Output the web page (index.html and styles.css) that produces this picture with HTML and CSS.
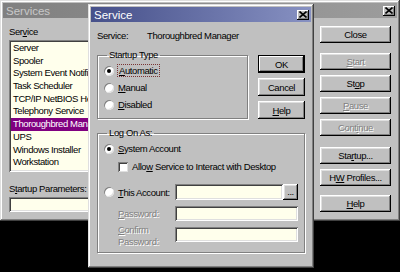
FILE: index.html
```html
<!DOCTYPE html>
<html lang="en">
<head>
    <meta charset="UTF-8" />
    <title>Services</title>
    <link rel="stylesheet" href="styles.css">
</head>
<body>
  <div class="janela servicos">
    <div class="titulo inativo">
      <span>Services</span>
      <span class="fechar"><svg width="8" height="7" viewBox="0 0 8 7"><path d="M0.5 0.5L7.5 6.5M7.5 0.5L0.5 6.5" stroke="#000" stroke-width="1.6"/></svg></span>
    </div>
    <div class="servicos-corpo">
      <div class="servicos-esq">
        <div class="rotulo">Ser<u>v</u>ice</div>
        <ul class="lista">
          <li>Server</li>
          <li>Spooler</li>
          <li>System Event Notification</li>
          <li>Task Scheduler</li>
          <li>TCP/IP NetBIOS Helper</li>
          <li>Telephony Service</li>
          <li class="sel">Thoroughbred Manager</li>
          <li>UPS</li>
          <li>Windows Installer</li>
          <li>Workstation</li>
        </ul>
        <div class="rotulo param">S<u>t</u>artup Parameters:</div>
        <div class="campo"></div>
      </div>
      <div class="servicos-botoes">
        <button class="botao">Close</button>
        <button class="botao off g1"><u>S</u>tart</button>
        <button class="botao g2">St<u>o</u>p</button>
        <button class="botao off g2"><u>P</u>ause</button>
        <button class="botao off g2">Cont<u>i</u>nue</button>
        <button class="botao g3">Sta<u>r</u>tup...</button>
        <button class="botao g2">H<u>W</u> Profiles...</button>
        <button class="botao g4"><u>H</u>elp</button>
      </div>
    </div>
  </div>

  <div class="janela dialogo">
    <div class="titulo ativo">
      <span>Service</span>
      <span class="fechar"><svg width="8" height="7" viewBox="0 0 8 7"><path d="M0.5 0.5L7.5 6.5M7.5 0.5L0.5 6.5" stroke="#000" stroke-width="1.6"/></svg></span>
    </div>
    <div class="dialogo-corpo">
      <div class="linha-servico">
        <span class="nome-rotulo">Service:</span>
        <span>Thoroughbred Manager</span>
      </div>

      <div class="linha-topo">
        <fieldset class="grupo inicio">
          <legend>Startup Type</legend>
          <div class="opcao"><span class="radio marcado"></span><span class="foco"><u>A</u>utomatic</span></div>
          <div class="opcao"><span class="radio"></span><span><u>M</u>anual</span></div>
          <div class="opcao"><span class="radio"></span><span><u>D</u>isabled</span></div>
        </fieldset>
        <div class="dialogo-botoes">
          <button class="botao padrao">OK</button>
          <button class="botao">Cancel</button>
          <button class="botao"><u>H</u>elp</button>
        </div>
      </div>

      <fieldset class="grupo logon">
        <legend>Log On As:</legend>
        <div class="opcao"><span class="radio marcado"></span><span><u>S</u>ystem Account</span></div>
        <div class="opcao check-linha"><span class="check"></span><span>Allo<u>w</u> Service to Interact with Desktop</span></div>
        <div class="opcao conta">
          <span class="radio"></span>
          <span class="conta-rotulo"><u>T</u>his Account:</span>
          <span class="campo curto"></span>
          <button class="botao mini">...</button>
        </div>
        <div class="opcao senha">
          <span class="senha-rotulo off"><u>P</u>assword:</span>
          <span class="campo longo"></span>
        </div>
        <div class="opcao senha confirma">
          <span class="senha-rotulo off"><u>C</u>onfirm<br>Password:</span>
          <span class="campo longo"></span>
        </div>
      </fieldset>
    </div>
  </div>
</body>
</html>
```

FILE: styles.css
```css
body {
    margin: 0;
    width: 400px;
    height: 272px;
    overflow: hidden;
    position: relative;
    background: #000;
    font-family: "Liberation Sans", Arial, sans-serif;
    font-size: 9.5px;
    letter-spacing: -0.4px;
    color: #000;
}

.janela {
    background: #c0c0c0;
    box-sizing: border-box;
    padding: 3px;
    box-shadow: inset -1px -1px #404040, inset 1px 1px #dfdfdf,
                inset -2px -2px #808080, inset 2px 2px #fff;
}

.servicos {
    width: 400px;
    height: 221px;
}

.titulo {
    height: 15px;
    display: flex;
    align-items: center;
    justify-content: space-between;
    padding: 0 2px 0 3px;
    font-size: 11.5px;
    letter-spacing: 0;
}

.titulo.inativo {
    background: linear-gradient(90deg, #808080, #9c9c9c);
    color: #c8c8c8;
}

.titulo.ativo {
    background: linear-gradient(90deg, #46508a, #8791c2);
    color: #fff;
}

.fechar {
    width: 12px;
    height: 10px;
    background: #c0c0c0;
    display: flex;
    align-items: center;
    justify-content: center;
    box-shadow: inset -1px -1px #000, inset 1px 1px #fff, inset -2px -2px #808080;
}

.servicos-corpo {
    display: flex;
}

.servicos-esq {
    flex: 1;
    padding: 8px 0 0 6px;
}

.rotulo {
    height: 12px;
    line-height: 12px;
}

.lista {
    list-style: none;
    margin: 2px 0 0;
    padding: 2px 0 0 2px;
    height: 132px;
    box-sizing: border-box;
    background: #ffffec;
    box-shadow: inset 1px 1px #808080, inset -1px -1px #fff,
                inset 2px 2px #404040, inset -2px -2px #dfdfdf;
    overflow: hidden;
}

.lista li {
    height: 12.7px;
    line-height: 12.7px;
    padding-left: 2px;
    white-space: nowrap;
}

.lista li.sel {
    background: #800080;
    color: #fff;
}

.rotulo.param {
    margin-top: 11px;
}

.campo {
    display: block;
    height: 15px;
    margin-top: 2px;
    box-sizing: border-box;
    background: #ffffec;
    box-shadow: inset 1px 1px #808080, inset -1px -1px #fff,
                inset 2px 2px #404040, inset -2px -2px #dfdfdf;
}

.servicos-botoes {
    width: 71px;
    padding: 8px 6px 0 8px;
    display: flex;
    flex-direction: column;
}

.botao {
    font: inherit;
    letter-spacing: inherit;
    color: #000;
    border: 0;
    padding: 0;
    height: 17px;
    box-sizing: border-box;
    background: #c0c0c0;
    box-shadow: inset -1px -1px #000, inset 1px 1px #fff,
                inset -2px -2px #808080, inset 2px 2px #dfdfdf;
}

.botao.off,
.off {
    color: #808080;
    text-shadow: 1px 1px #fff;
}

.g1 { margin-top: 10px; }
.g2 { margin-top: 5px; }
.g3 { margin-top: 11px; }
.g4 { margin-top: 9px; }

.dialogo {
    position: absolute;
    left: 88px;
    top: 4px;
    width: 226px;
    height: 264px;
}

.dialogo-corpo {
    padding: 0 6px 0 6px;
}

.linha-servico {
    display: flex;
    height: 12px;
    line-height: 12px;
    margin-top: 8px;
}

.nome-rotulo {
    width: 50px;
}

.linha-topo {
    display: flex;
    margin-top: 7px;
}

.grupo {
    margin: 0;
    padding: 1px 6px 0;
    border: 1px solid #808080;
    box-shadow: 1px 1px 0 #fff, inset 1px 1px 0 #fff;
}

.grupo legend {
    padding: 0 2px;
    margin-left: 3px;
    height: 12px;
    line-height: 12px;
}

.grupo.inicio {
    width: 151px;
    box-sizing: border-box;
    padding-bottom: 4px;
}

.opcao {
    display: flex;
    align-items: center;
    height: 17px;
}

.radio {
    position: relative;
    flex: none;
    width: 10px;
    height: 10px;
    margin-right: 4px;
    border-radius: 50%;
    background: #fff;
    box-shadow: inset 1px 1px #808080, inset -1px -1px #dfdfdf;
}

.radio.marcado::after {
    content: "";
    position: absolute;
    left: 3px;
    top: 3px;
    width: 4px;
    height: 4px;
    border-radius: 50%;
    background: #000;
}

.foco {
    outline: 1px dotted #7a3434;
    padding: 0 1px;
}

.dialogo-botoes {
    width: 47px;
    margin: 6px 0 0 10px;
    display: flex;
    flex-direction: column;
    gap: 5px;
}

.dialogo-botoes .botao {
    height: 18px;
}

.botao.padrao {
    box-shadow: inset 0 0 0 1px #000, inset -2px -2px #000, inset 2px 2px #fff,
                inset -3px -3px #808080;
}

.grupo.logon {
    margin-top: 8px;
    width: 208px;
    box-sizing: border-box;
    padding-bottom: 10px;
}

.check-linha {
    height: 19px;
    padding-left: 14px;
}

.check {
    flex: none;
    width: 10px;
    height: 10px;
    margin-right: 4px;
    background: #fff;
    box-shadow: inset 1px 1px #808080, inset -1px -1px #dfdfdf,
                inset 2px 2px #404040;
}

.conta {
    margin-top: 8px;
    height: 16px;
}

.conta-rotulo {
    width: 57px;
    white-space: nowrap;
}

.campo.curto {
    width: 108px;
    height: 16px;
    margin: 0;
}

.botao.mini {
    width: 15px;
    height: 16px;
    line-height: 10px;
}

.senha {
    margin-top: 6px;
    height: 15px;
    padding-left: 14px;
}

.senha-rotulo {
    width: 57px;
    line-height: 12px;
}

.campo.longo {
    width: 123px;
    margin: 0;
}

.senha.confirma {
    align-items: flex-start;
}

.senha.confirma .senha-rotulo {
    margin-top: -3px;
}
```
